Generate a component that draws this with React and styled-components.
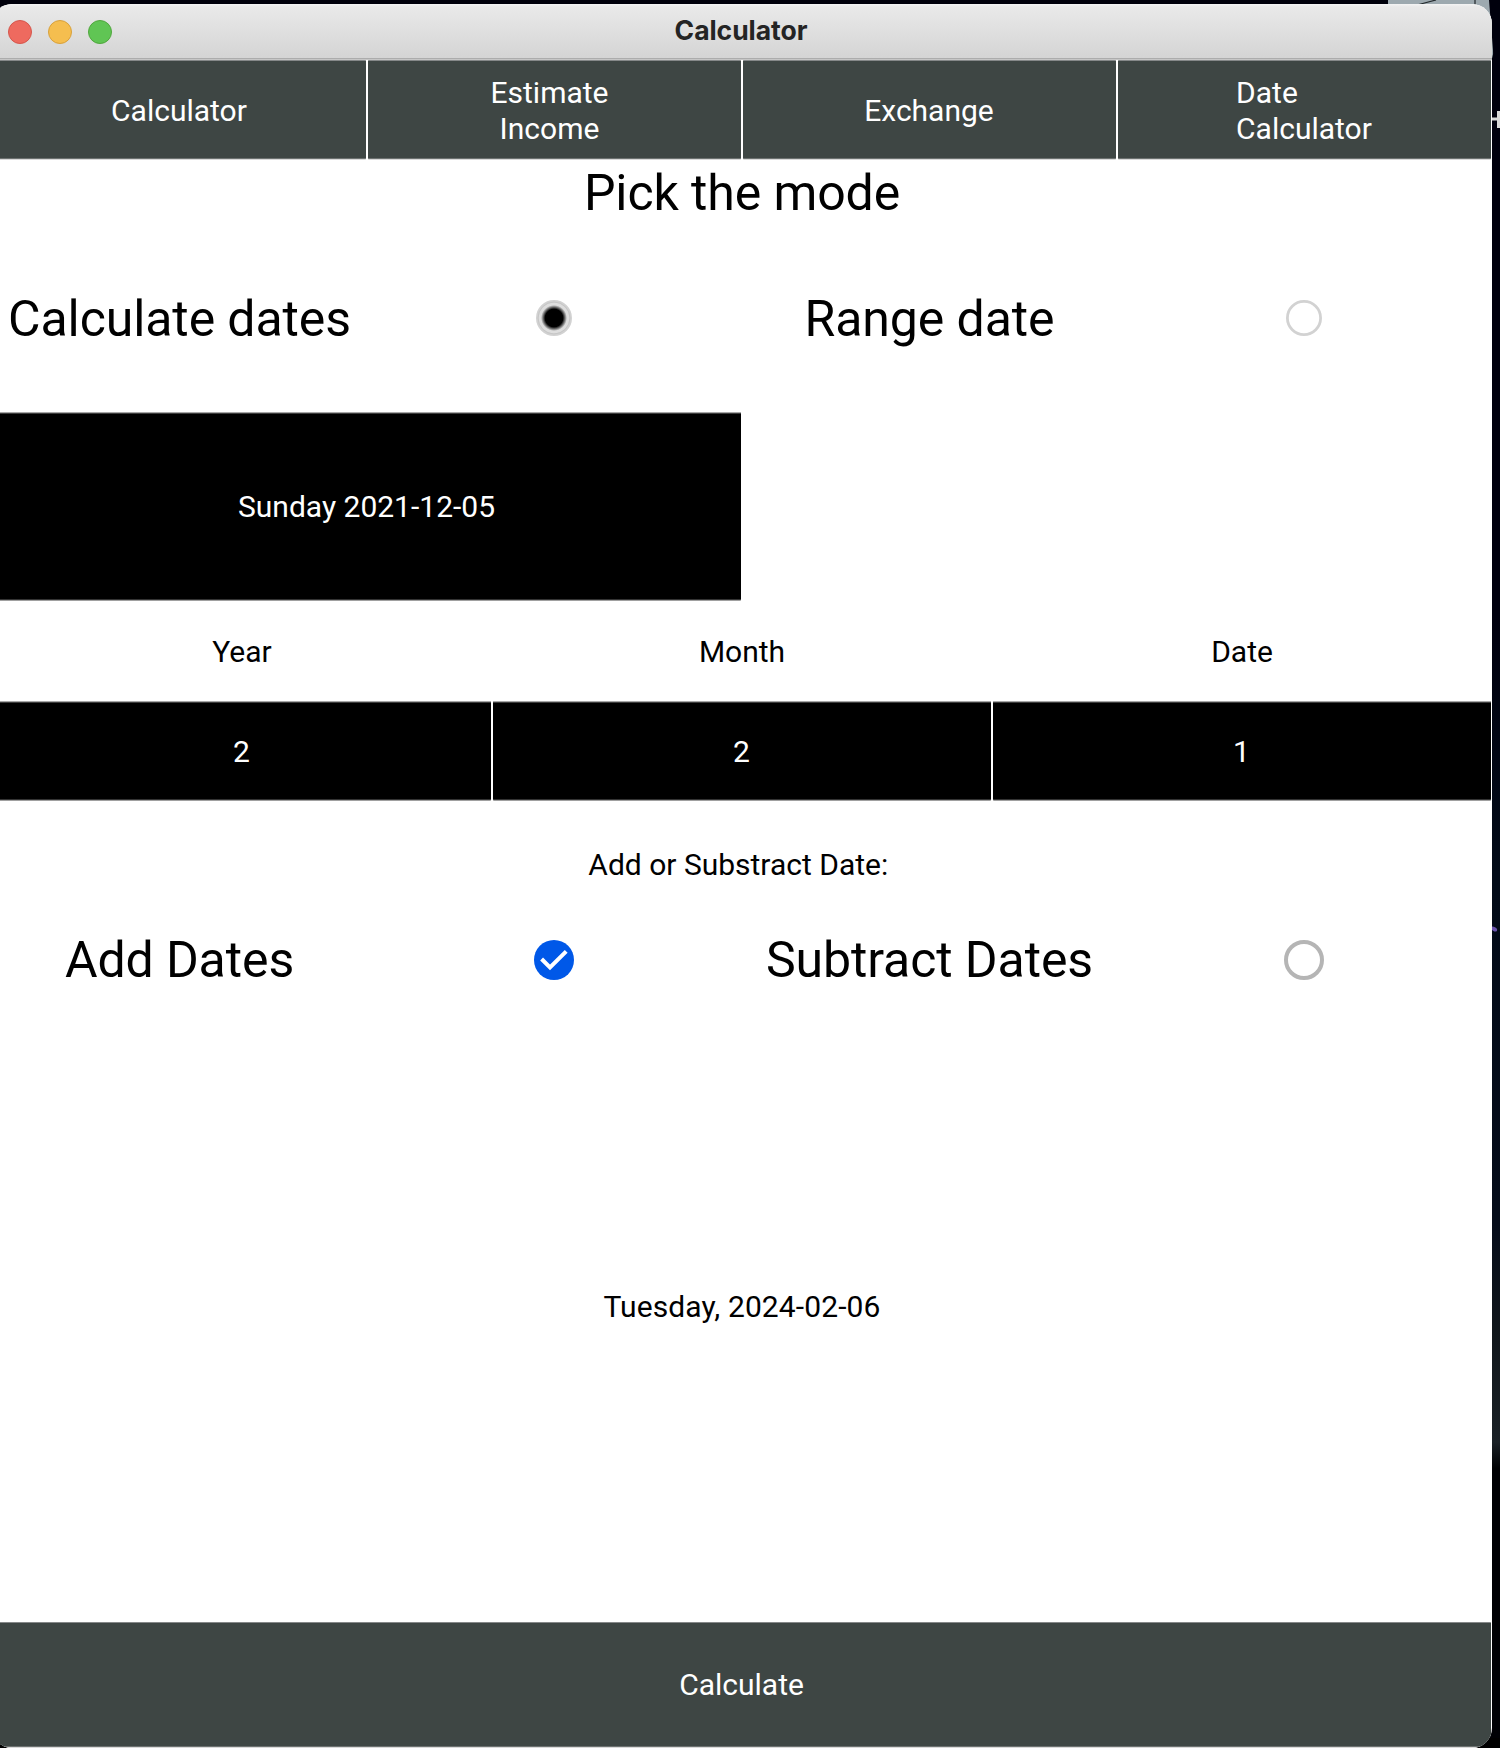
import React from "react";
import styled, { createGlobalStyle } from "styled-components";

const GlobalStyle = createGlobalStyle`
  * { box-sizing: border-box; }
  body { margin: 0; background: #000008; }
`;

const Desktop = styled.div`
  position: relative;
  width: 1500px;
  height: 1748px;
  padding-top: 4px;
  overflow: hidden;
  background: #00000b;
  font-family: Roboto, "Liberation Sans", sans-serif;
`;

const Wallpaper = styled.svg`
  position: absolute;
  inset: 0;
`;

const Window = styled.div`
  position: relative;
  display: flex;
  flex-direction: column;
  width: 1500px;
  height: 1744px;
  margin-left: -8px;
  border-radius: 20px;
  overflow: hidden;
  background: #fff;
`;

const TitleBar = styled.header`
  display: grid;
  grid-template-columns: 1fr auto 1fr;
  align-items: center;
  flex: none;
  height: 56px;
  padding: 0 16px;
  background: linear-gradient(#f4f4f4 0, #e9e9e9 3px, #d4d4d4 100%);
  border-bottom: 1px solid #c6c6c6;
  box-shadow: inset 0 -1px #acacac;
`;

const Lights = styled.div`
  display: flex;
  gap: 16px;
`;

const Light = styled.span`
  width: 24px;
  height: 24px;
  border-radius: 50%;
  background: ${(p) => p.$fill};
  border: 1px solid ${(p) => p.$edge};
`;

const WindowTitle = styled.h1`
  margin: 0;
  font: 700 26.5px/30px Inter, sans-serif;
  letter-spacing: -0.05px;
  color: #242424;
  padding: 0 2px 3px 0;
`;

const Row = styled.div`
  display: grid;
  grid-template-columns: repeat(${(p) => p.$columns}, 1fr);
  flex: none;
  height: ${(p) => p.$height}px;
`;

const Button = styled.button`
  display: flex;
  align-items: center;
  justify-content: center;
  margin: 0 1px 1px;
  padding: ${(p) => (p.$flat ? 0 : 2)}px ${(p) => p.$inset || 1}px 0 0;
  border: 0;
  border-top: 1px solid ${(p) => (p.$dark ? "#a8a8a8" : "#858889")};
  border-bottom: 1px solid ${(p) => (p.$dark ? "#333" : "#6c7170")};
  border-radius: 1px;
  box-shadow: ${(p) => (p.$dark ? "0 1px #a0a0a0, inset 0 1px #3c3c3c" : "0 1px #d9d9d9")};
  background: ${(p) => (p.$dark ? "#000" : "#3e4644")};
  color: #fff;
  font: 400 30px/36px Roboto, sans-serif;
  text-align: ${(p) => p.$align || "center"};
  white-space: pre-line;
`;

const Label = styled.div`
  display: flex;
  align-items: center;
  justify-content: center;
  flex: none;
  height: ${(p) => (p.$height ? `${p.$height}px` : "100%")};
  padding-top: ${(p) => (p.$lowered ? 2 : 0)}px;
  font-size: ${(p) => (p.$large ? 50 : 30)}px;
  letter-spacing: ${(p) => (p.$large ? "-0.1px" : "normal")};
  line-height: 1.17;
  color: #000;
  white-space: pre;
`;

const Toggle = styled.div`
  display: flex;
  align-items: center;
  justify-content: center;
  padding: 0 1px ${(p) => (p.$raised ? 1 : 0)}px 0;
`;

const Result = styled(Label)`
  flex: 1;
  letter-spacing: 0.12px;
`;

function Radio({ checked }) {
  return (
    <svg width="36" height="36" viewBox="0 0 36 36">
      <defs>
        <radialGradient id="radio-dot">
          <stop offset="0.68" stopColor="#000" />
          <stop offset="1" stopColor="#000" stopOpacity="0" />
        </radialGradient>
      </defs>
      <circle cx="18" cy="18" r="16.6" fill={checked ? "#dedede" : "#fff"} stroke="#d2d2d2" strokeWidth="2.8" />
      {checked && <circle cx="18" cy="18" r="16" fill="none" stroke="#c6c6c6" strokeWidth="1" />}
      {checked && <circle cx="18" cy="18" r="13" fill="url(#radio-dot)" />}
    </svg>
  );
}

function Check({ checked }) {
  return (
    <svg width="40" height="40" viewBox="0 0 40 40">
      {checked ? (
        <>
          <circle cx="20" cy="20" r="20" fill="#0058e8" />
          <path d="M7.6 19 L16 27.5 L32.2 11.3" fill="none" stroke="#fff" strokeWidth="4" />
        </>
      ) : (
        <circle cx="20" cy="20" r="18" fill="#fff" stroke="#b5b5b5" strokeWidth="4" />
      )}
    </svg>
  );
}

const tabs = [
  { text: "Calculator" },
  { text: "Estimate\nIncome", inset: 10 },
  { text: "Exchange" },
  { text: "Date\nCalculator", align: "left" },
];

export default function App() {
  return (
    <Desktop>
      <GlobalStyle />
      <Wallpaper width="1500" height="1748" viewBox="0 0 1500 1748">
        <defs>
          <linearGradient id="sky" x1="0" y1="0" x2="0" y2="1">
            <stop offset="0" stopColor="#00000d" />
            <stop offset="0.35" stopColor="#00000f" />
            <stop offset="0.5" stopColor="#020b18" />
            <stop offset="0.7" stopColor="#050c1a" />
            <stop offset="0.76" stopColor="#10161b" />
            <stop offset="0.825" stopColor="#1a2126" />
            <stop offset="0.84" stopColor="#000104" />
            <stop offset="1" stopColor="#000105" />
          </linearGradient>
        </defs>
        <rect x="1490" width="10" height="1748" fill="url(#sky)" />
        <path d="M1388 0H1489L1493 50Q1494 60 1488 60H1460V20H1388Z" fill="#9da9af" />
        <path d="M1417 5L1436 0M1475 0V8" stroke="#22282b" strokeWidth="1.2" />
        <path d="M1492 119H1500M1498.5 111V128" stroke="#d8d8d8" strokeWidth="3" />
        <ellipse cx="1494" cy="929" rx="3.4" ry="2" fill="#6a54ae" transform="rotate(30 1494 929)" />
        <rect x="0" y="1738" width="1500" height="10" fill="#000" />
      </Wallpaper>
      <Window>
        <TitleBar>
          <Lights>
            <Light $fill="#ee6a5f" $edge="#d5564c" />
            <Light $fill="#f5be4f" $edge="#d8a13c" />
            <Light $fill="#60c554" $edge="#51a73e" />
          </Lights>
          <WindowTitle>Calculator</WindowTitle>
        </TitleBar>
        <Row $columns={4} $height={100}>
          {tabs.map((tab) => (
            <Button key={tab.text} $align={tab.align} $inset={tab.inset}>{tab.text}</Button>
          ))}
        </Row>
        <Label $large $lowered $height={65}>Pick the mode</Label>
        <Row $columns={4} $height={187}>
          <Label $large $lowered>Calculate dates</Label>
          <Toggle $raised><Radio checked /></Toggle>
          <Label $large $lowered>Range date</Label>
          <Toggle $raised><Radio /></Toggle>
        </Row>
        <Row $columns={2} $height={189}>
          <Button $dark>Sunday 2021-12-05</Button>
        </Row>
        <Row $columns={3} $height={100}>
          <Label $lowered>Year</Label>
          <Label $lowered>Month</Label>
          <Label $lowered>Date</Label>
        </Row>
        <Row $columns={3} $height={100}>
          <Button $dark>2</Button>
          <Button $dark>2</Button>
          <Button $dark>1</Button>
        </Row>
        <Label $height={127}>{"Add or Substract Date: "}</Label>
        <Row $columns={4} $height={64}>
          <Label $large>Add Dates</Label>
          <Toggle><Check checked /></Toggle>
          <Label $large>Subtract Dates</Label>
          <Toggle><Check /></Toggle>
        </Row>
        <Result>Tuesday, 2024-02-06</Result>
        <Row $columns={1} $height={126}>
          <Button $flat>Calculate</Button>
        </Row>
      </Window>
    </Desktop>
  );
}
